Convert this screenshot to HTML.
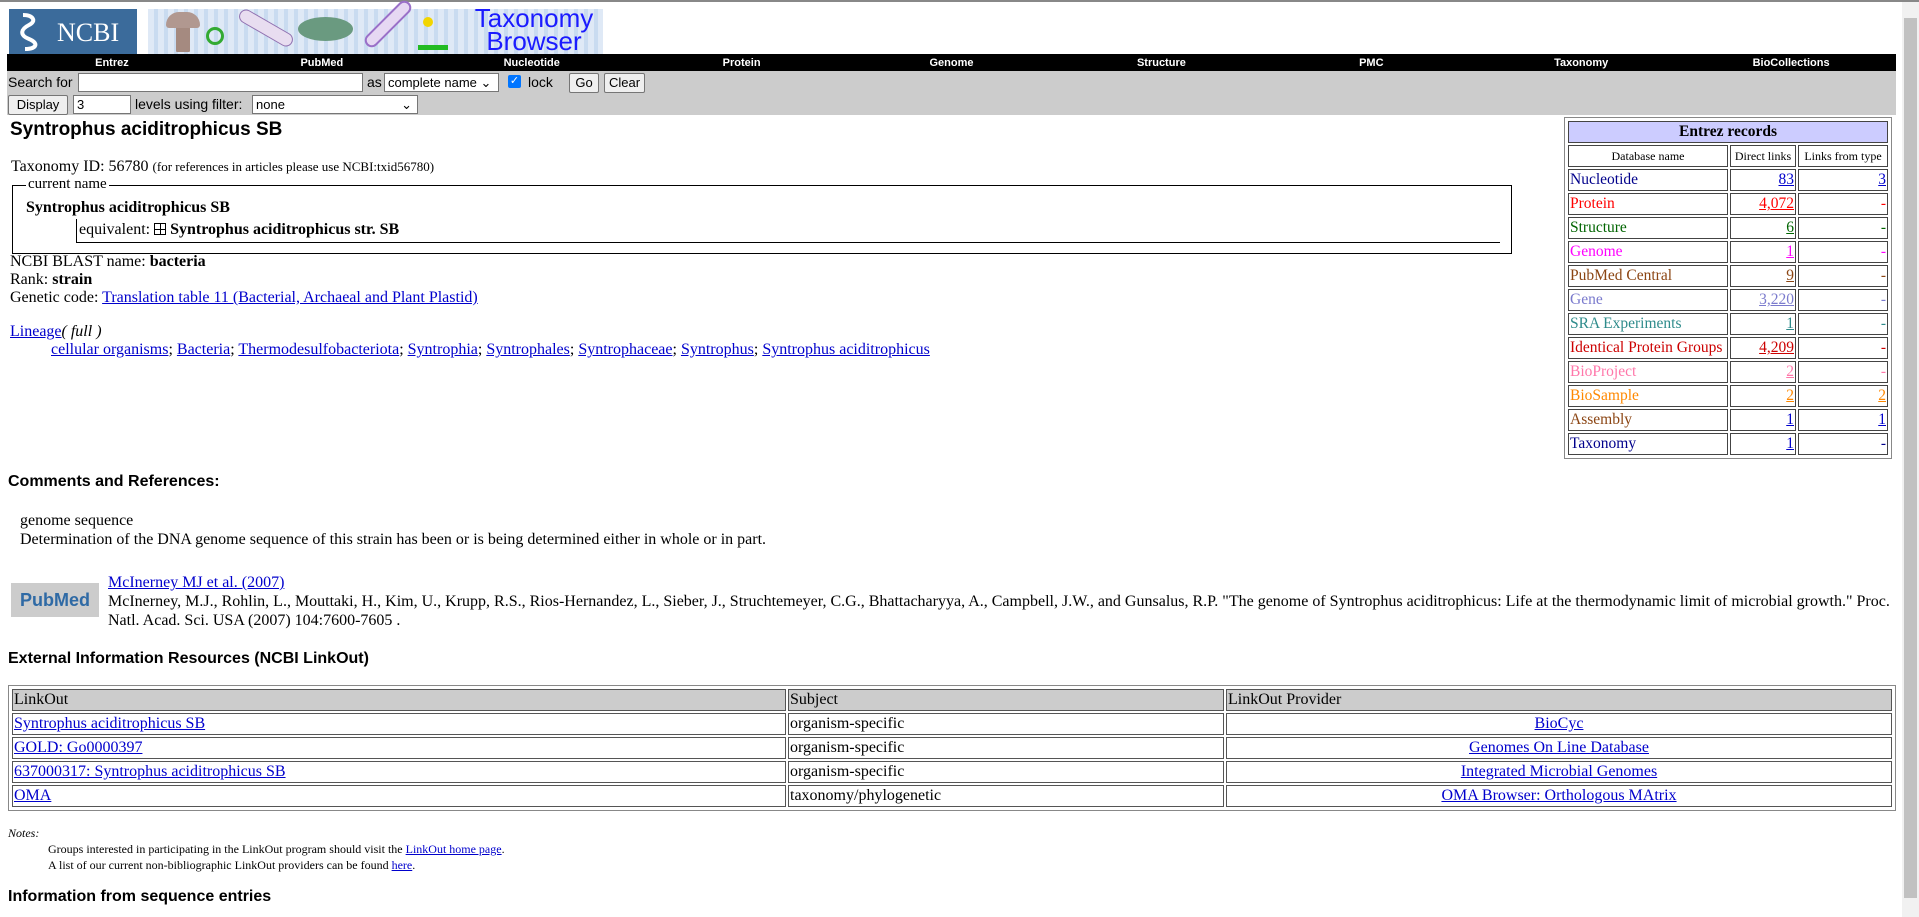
<!DOCTYPE html>
<html><head><meta charset="utf-8">
<style>
*{box-sizing:border-box}
body{margin:0;width:1919px;height:917px;overflow:hidden;background:#fff;font-family:"Liberation Serif",serif;font-size:16px;color:#000;position:relative}
a{color:#0000cc;text-decoration:underline}
.abs{position:absolute;white-space:nowrap}
.sans{font-family:"Liberation Sans",sans-serif}
table{border-collapse:separate}
#nav{position:absolute;left:7px;top:54px;width:1889px;height:17px;background:#000;display:flex}
#nav div{flex:1;text-align:center;color:#fff;font:bold 11px/18px "Liberation Sans",sans-serif}
#form{position:absolute;left:7px;top:71px;width:1889px;height:44px;background:#ccc;font:14px "Liberation Sans",sans-serif}
.inp{position:absolute;background:#fff;border:1px solid #767676;height:19px;font-size:13px;padding:1px 3px}
.btn{position:absolute;background:#efefef;border:1px solid #767676;border-radius:2px;height:20px;font-size:13px;text-align:center;line-height:18px}
#ent{position:absolute;left:1564px;top:117px;width:328px;border:1px solid #888;padding:1px}
#ent table{width:100%;border-spacing:2px}
#ent td{border:1px solid #444;height:22px;padding:0 1px;font-size:15.5px;line-height:20px}
#ent td.r{text-align:right}
#lo{position:absolute;left:8px;top:685px;width:1888px;border:1px solid #888;padding:1px}
#lo table{width:100%;border-spacing:2px}
#lo td{border:1px solid #555;height:22px;padding:0 1px;font-size:16px;line-height:20px}
</style></head><body>
<div style="position:absolute;left:0;top:0;width:1919px;height:2px;background:#888"></div>
<div style="position:absolute;left:1902px;top:2px;width:17px;height:915px;background:#f1f1f1"></div>
<div style="position:absolute;left:1904px;top:18px;width:13px;height:880px;background:#c1c1c1"></div>

<div style="position:absolute;left:9px;top:9px;width:128px;height:45px;background:#3b6b9b">
<svg width="30" height="40" style="position:absolute;left:6px;top:3px" viewBox="0 0 30 40"><path d="M8 3c10 0 14 6 6 10s-10 10 0 14 8 10-4 10" fill="none" stroke="#fff" stroke-width="4"/></svg>
<span style="position:absolute;left:48px;top:9px;color:#fff;font:26px 'Liberation Serif',serif">NCBI</span></div>
<div style="position:absolute;left:148px;top:9px;width:455px;height:45px;background:repeating-linear-gradient(90deg,#dfe9f6 0 6px,#c9dbf0 6px 10px)">
<div style="position:absolute;left:28px;top:5px;width:14px;height:38px;background:#a58a80;border-radius:12px 12px 2px 2px"></div>
<div style="position:absolute;left:18px;top:3px;width:34px;height:16px;background:#b19890;border-radius:17px 17px 4px 4px"></div>
<div style="position:absolute;left:58px;top:18px;width:18px;height:18px;border:3px solid #3a3;border-radius:50%"></div>
<div style="position:absolute;left:88px;top:12px;width:60px;height:14px;background:#e8ddf0;border:1px solid #9070b0;border-radius:8px;transform:rotate(30deg)"></div>
<div style="position:absolute;left:150px;top:8px;width:55px;height:24px;background:#6a9a80;border-radius:50%"></div>
<div style="position:absolute;left:210px;top:8px;width:60px;height:14px;background:#e6d8f3;border:2px solid #9a70c8;border-radius:8px;transform:rotate(-45deg)"></div>
<div style="position:absolute;left:275px;top:8px;width:10px;height:10px;background:#f2d500;border-radius:50%"></div>
<div style="position:absolute;left:270px;top:36px;width:30px;height:5px;background:#2b2"></div>
<div style="position:absolute;left:321px;top:-2px;width:130px;text-align:center;color:#1b1bff;font:26px/23px 'Liberation Sans',sans-serif">Taxonomy<br>Browser</div>
</div>

<div id="nav"><div>Entrez</div><div>PubMed</div><div>Nucleotide</div><div>Protein</div><div>Genome</div><div>Structure</div><div>PMC</div><div>Taxonomy</div><div>BioCollections</div></div>

<div id="form">
<span class="abs" style="left:1px;top:3px">Search for</span>
<div class="inp" style="left:71px;top:2px;width:285px"></div>
<span class="abs" style="left:360px;top:3px">as</span>
<div class="inp" style="left:377px;top:2px;width:115px">complete name &#8964;</div>
<div style="position:absolute;left:501px;top:4px;width:13px;height:13px;background:#0075ff;border-radius:2px;color:#fff;font-size:11px;line-height:13px;text-align:center">✓</div>
<span class="abs" style="left:521px;top:3px">lock</span>
<div class="btn" style="left:562px;top:2px;width:30px">Go</div>
<div class="btn" style="left:597px;top:2px;width:41px">Clear</div>
<div class="btn" style="left:1px;top:24px;width:60px">Display</div>
<div class="inp" style="left:66px;top:24px;width:58px">3</div>
<span class="abs" style="left:128px;top:25px">levels using filter:</span>
<div class="inp" style="left:245px;top:24px;width:166px">none<span style="position:absolute;right:5px">&#8964;</span></div>
</div>

<div class="abs sans" style="left:10px;top:119px;font-size:19px;font-weight:bold">Syntrophus aciditrophicus SB</div>
<div class="abs" style="left:11px;top:158px">Taxonomy ID: 56780 <span style="font-size:13px">(for references in articles please use NCBI:txid56780)</span></div>

<div style="position:absolute;left:12px;top:185px;width:1500px;height:69px;border:1px solid #000"></div>
<span class="abs" style="left:26px;top:176px;background:#fff;padding:0 2px;font-size:15px">current name</span>
<div class="abs" style="left:26px;top:199px;font-weight:bold;font-size:16px">Syntrophus aciditrophicus SB</div>
<div style="position:absolute;left:76px;top:219px;width:1424px;height:24px;border-left:1px solid #000;border-bottom:1px solid #000"></div>
<div class="abs" style="left:79px;top:221px;font-size:16px">equivalent: <span style="display:inline-block;width:12px;height:12px;border:1px solid #000;vertical-align:-1px;background:linear-gradient(#000,#000) center/1px 100% no-repeat,linear-gradient(#000,#000) center/100% 1px no-repeat"></span> <b>Syntrophus aciditrophicus str. SB</b></div>

<div class="abs" style="left:10px;top:253px;font-size:16px;line-height:18px">NCBI BLAST name: <b>bacteria</b><br>Rank: <b>strain</b><br>Genetic code: <a>Translation table 11 (Bacterial, Archaeal and Plant Plastid)</a></div>
<div class="abs" style="left:10px;top:323px;font-size:16px;line-height:18px"><a>Lineage</a><i>( full )</i></div>
<div class="abs" style="left:51px;top:341px;font-size:16px"><a>cellular organisms</a>; <a>Bacteria</a>; <a>Thermodesulfobacteriota</a>; <a>Syntrophia</a>; <a>Syntrophales</a>; <a>Syntrophaceae</a>; <a>Syntrophus</a>; <a>Syntrophus aciditrophicus</a></div>

<div class="abs sans" style="left:8px;top:473px;font-size:16px;font-weight:bold">Comments and References:</div>
<div class="abs" style="left:20px;top:511px;font-size:16px;line-height:19px">genome sequence<br>Determination of the DNA genome sequence of this strain has been or is being determined either in whole or in part.</div>

<div style="position:absolute;left:11px;top:583px;width:88px;height:34px;background:#ccc;font:bold 18px/34px 'Liberation Sans',sans-serif;color:#2f6aa5;text-align:center">PubMed</div>
<div class="abs" style="left:108px;top:573px;font-size:16px;line-height:19px"><a>McInerney MJ et al. (2007)</a><br>McInerney, M.J., Rohlin, L., Mouttaki, H., Kim, U., Krupp, R.S., Rios-Hernandez, L., Sieber, J., Struchtemeyer, C.G., Bhattacharyya, A., Campbell, J.W., and Gunsalus, R.P. "The genome of Syntrophus aciditrophicus: Life at the thermodynamic limit of microbial growth." Proc.<br>Natl. Acad. Sci. USA (2007) 104:7600-7605 .</div>

<div class="abs sans" style="left:8px;top:650px;font-size:16px;font-weight:bold">External Information Resources (NCBI LinkOut)</div>

<div id="lo"><table>
<tr style="background:#ccc"><td style="width:774px">LinkOut</td><td style="width:436px">Subject</td><td>LinkOut Provider</td></tr>
<tr><td><a>Syntrophus aciditrophicus SB</a></td><td>organism-specific</td><td style="text-align:center"><a>BioCyc</a></td></tr>
<tr><td><a>GOLD: Go0000397</a></td><td>organism-specific</td><td style="text-align:center"><a>Genomes On Line Database</a></td></tr>
<tr><td><a>637000317: Syntrophus aciditrophicus SB</a></td><td>organism-specific</td><td style="text-align:center"><a>Integrated Microbial Genomes</a></td></tr>
<tr><td><a>OMA</a></td><td>taxonomy/phylogenetic</td><td style="text-align:center"><a>OMA Browser: Orthologous MAtrix</a></td></tr>
</table></div>

<div class="abs" style="left:8px;top:826px;font-size:12px"><i>Notes:</i></div>
<div class="abs" style="left:48px;top:841px;font-size:12px;line-height:16px">Groups interested in participating in the LinkOut program should visit the <a>LinkOut home page</a>.<br>A list of our current non-bibliographic LinkOut providers can be found <a>here</a>.</div>
<div class="abs sans" style="left:8px;top:888px;font-size:16px;font-weight:bold">Information from sequence entries</div>

<div id="ent"><table>
<tr><td colspan="3" style="background:#ccf;text-align:center;font-weight:bold">Entrez records</td></tr>
<tr><td style="text-align:center;font-size:12px;width:160px">Database name</td><td style="text-align:center;font-size:12px;width:66px;padding:0">Direct links</td><td style="text-align:center;font-size:12px;padding:0">Links from type</td></tr>
<tr style="color:#00008b"><td>Nucleotide</td><td class="r"><a>83</a></td><td class="r"><a>3</a></td></tr>
<tr style="color:#f00"><td>Protein</td><td class="r"><a style="color:#f00">4,072</a></td><td class="r">-</td></tr>
<tr style="color:#006400"><td>Structure</td><td class="r"><a style="color:#006400">6</a></td><td class="r">-</td></tr>
<tr style="color:#f0f"><td>Genome</td><td class="r"><a style="color:#f0f">1</a></td><td class="r">-</td></tr>
<tr style="color:#8b4513"><td>PubMed Central</td><td class="r"><a style="color:#8b4513">9</a></td><td class="r">-</td></tr>
<tr style="color:#7a7acd"><td>Gene</td><td class="r"><a style="color:#7a7acd">3,220</a></td><td class="r">-</td></tr>
<tr style="color:#2e8b8b"><td>SRA Experiments</td><td class="r"><a style="color:#2e8b8b">1</a></td><td class="r">-</td></tr>
<tr style="color:#c00"><td>Identical Protein Groups</td><td class="r"><a style="color:#c00">4,209</a></td><td class="r">-</td></tr>
<tr style="color:#f7a"><td>BioProject</td><td class="r"><a style="color:#f7a">2</a></td><td class="r">-</td></tr>
<tr style="color:#f80"><td>BioSample</td><td class="r"><a style="color:#f80">2</a></td><td class="r"><a style="color:#f80">2</a></td></tr>
<tr style="color:#8b4513"><td>Assembly</td><td class="r"><a>1</a></td><td class="r"><a>1</a></td></tr>
<tr style="color:#00008b"><td>Taxonomy</td><td class="r"><a>1</a></td><td class="r">-</td></tr>
</table></div>
</body></html>
